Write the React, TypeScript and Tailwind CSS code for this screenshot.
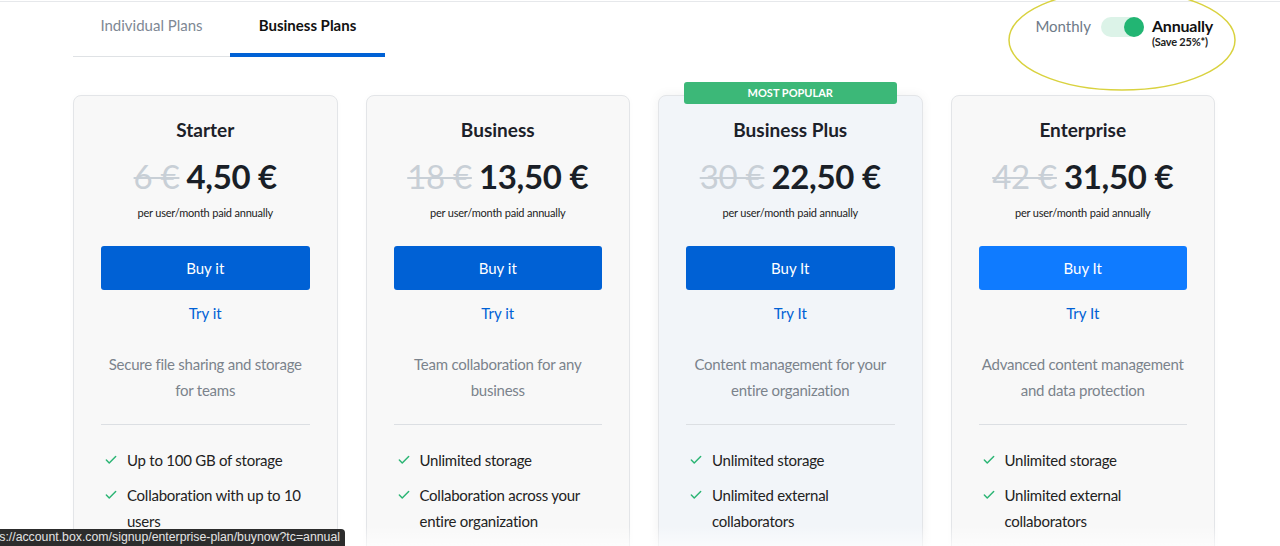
import { Check } from 'lucide-react';

interface Plan {
  name: string;
  oldPrice: string;
  price: string;
  buy: string;
  tryLabel: string;
  desc: string[];
  features: string[][];
  popular?: boolean;
  bright?: boolean;
}

const plans: Plan[] = [
  {
    name: 'Starter',
    oldPrice: '6 €',
    price: '4,50 €',
    buy: 'Buy it',
    tryLabel: 'Try it',
    desc: ['Secure file sharing and storage', 'for teams'],
    features: [['Up to 100 GB of storage'], ['Collaboration with up to 10', 'users']],
  },
  {
    name: 'Business',
    oldPrice: '18 €',
    price: '13,50 €',
    buy: 'Buy it',
    tryLabel: 'Try it',
    desc: ['Team collaboration for any', 'business'],
    features: [['Unlimited storage'], ['Collaboration across your', 'entire organization']],
  },
  {
    name: 'Business Plus',
    oldPrice: '30 €',
    price: '22,50 €',
    buy: 'Buy It',
    tryLabel: 'Try It',
    desc: ['Content management for your', 'entire organization'],
    features: [['Unlimited storage'], ['Unlimited external', 'collaborators']],
    popular: true,
  },
  {
    name: 'Enterprise',
    oldPrice: '42 €',
    price: '31,50 €',
    buy: 'Buy It',
    tryLabel: 'Try It',
    desc: ['Advanced content management', 'and data protection'],
    features: [['Unlimited storage'], ['Unlimited external', 'collaborators']],
    bright: true,
  },
];

function PlanCard({ p }: { p: Plan }) {
  return (
    <div
      className={
        'relative rounded-lg border border-[#e3e5e8] px-[27px] pt-[22px] pb-10 ' +
        (p.popular ? 'bg-[#f2f5f9] shadow-[0_0_12px_rgba(0,0,0,0.06)]' : 'bg-[#f8f8f8] shadow-[0_0_6px_rgba(0,0,0,0.02)]')
      }
    >
      {p.popular && (
        <div className="absolute -top-[14px] left-[25px] right-[25px] h-[22px] rounded-[3px] bg-[#3cb878] text-center text-[11px] font-bold leading-[22px] text-white">
          MOST POPULAR
        </div>
      )}
      <h3 className="text-center text-[19px] font-bold leading-6 text-[#1c2129]">{p.name}</h3>
      <div className="mt-[18px] flex items-baseline justify-center gap-[7px] leading-none tracking-[-0.3px]">
        <span className="text-[33px] text-[#c8cfd6] line-through decoration-[2px]">{p.oldPrice}</span>
        <span className="text-[33px] font-bold text-[#1a1f27]">{p.price}</span>
      </div>
      <p className="mt-[12px] text-center text-[11px] leading-4 tracking-[-0.2px] text-[#222]">per user/month paid annually</p>
      <button
        className={
          'mt-[25px] block h-[44px] w-full rounded-[3px] text-[15px] text-white ' +
          (p.bright ? 'bg-[#0f7bff]' : 'bg-[#0061d5]')
        }
      >
        {p.buy}
      </button>
      <div className="mt-[13px] text-center text-[15px] leading-5 text-[#0061d5]">{p.tryLabel}</div>
      <div className="-mx-2 mt-[28px] text-center text-[15px] leading-[26px] tracking-[-0.25px] text-[#7b838c]">
        {p.desc.map((d) => (
          <div key={d}>{d}</div>
        ))}
      </div>
      <div className="mt-[21px] h-px bg-[#dcdfe3]" />
      <ul className="-mr-6 mt-[22px] flex flex-col gap-[9px] pl-[3px] text-[15px] leading-[26px] tracking-[-0.25px] text-[#222]">
        {p.features.map((f) => (
          <li key={f[0]} className="flex gap-[9px]">
            <Check className="mt-[6px] h-[14px] w-[14px] shrink-0 text-[#2bb574]" strokeWidth={2.5} />
            <div>
              {f.map((l) => (
                <div key={l}>{l}</div>
              ))}
            </div>
          </li>
        ))}
      </ul>
    </div>
  );
}

export default function App() {
  return (
    <div className="relative h-[546px] w-[1280px] overflow-hidden bg-white font-['Lato','Noto_Sans',sans-serif]">
      <div className="h-[2px] border-b border-[#e6e8eb]" />
      <div className="ml-[73px] w-[1142px]">
        <div className="flex items-start justify-between">
          <div className="flex">
            <div className="w-[157px] border-b border-[#dfe2e5] pt-[13px] pb-[21px] text-center text-[15px] leading-5 text-[#7e8894]">
              Individual Plans
            </div>
            <div className="w-[155px] border-b-4 border-[#0061d5] pt-[13px] pb-[18px] text-center text-[15px] font-bold leading-5 text-[#111]">
              Business Plans
            </div>
          </div>
          <div className="mr-[2px] mt-[14px] flex items-start">
            <span className="text-[15px] leading-5 text-[#6e7a88]">Monthly</span>
            <div className="ml-[10px] mt-[1px] flex h-[20px] w-[43px] items-center justify-end rounded-full bg-[#dcf3e8]">
              <div className="h-[20px] w-[20px] rounded-full bg-[#22b573]" />
            </div>
            <div className="ml-[8px] flex flex-col">
              <span className="text-[16px] font-bold leading-5 tracking-[-0.2px] text-[#111]">Annually</span>
              <span className="text-[11px] font-bold leading-3 tracking-[-0.2px] text-[#222]">(Save 25%*)</span>
            </div>
          </div>
        </div>
        <div className="mt-[38px] grid grid-cols-4 gap-[28px]">
          {plans.map((p) => (
            <PlanCard key={p.name} p={p} />
          ))}
        </div>
      </div>

      {/* highlight ring drawn over the toggle */}
      <svg className="pointer-events-none absolute left-0 top-0" width="1280" height="546">
        <ellipse cx="1122" cy="40" rx="113" ry="50" fill="none" stroke="#d9d23f" strokeWidth="1.5" />
      </svg>

      <div className="pointer-events-none absolute bottom-0 left-0 right-0 h-[20px] bg-gradient-to-b from-transparent to-white/60" />

      <div className="absolute bottom-0 left-0 flex h-[17px] w-[345px] justify-end overflow-hidden rounded-tr-[4px] bg-[#2c2c2c] pr-[5px] font-['Liberation_Sans',sans-serif] text-[12.3px] leading-[17px] whitespace-nowrap text-[#e4e4e4]">
        s://account.box.com/signup/enterprise-plan/buynow?tc=annual
      </div>
    </div>
  );
}
